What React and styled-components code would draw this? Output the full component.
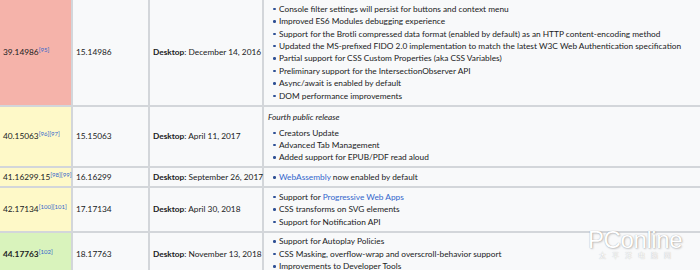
import React from "react";
import styled, { createGlobalStyle } from "styled-components";

const Global = createGlobalStyle`
  html, body { margin: 0; padding: 0; background: #ffffff; }
  body { font-family: "Lato", "Noto Sans", sans-serif; color: #202122; }
`;

const Page = styled.div`
  position: relative;
  width: 700px;
  height: 270px;
  overflow: hidden;
  background: #f8f9fa;
`;

const Table = styled.table`
  width: 700px;
  border-collapse: collapse;
  table-layout: fixed;
  font-size: 8.3px;
  line-height: 12.4px;
  background: #f8f9fa;
`;

const Row = styled.tr`
  & + & > td { border-top: 2px solid #d3d6da; }
`;

const tones = {
  red: "#f5b3aa",
  yellow: "#fef9c8",
  green: "#d9f3bc",
};

const Cell = styled.td`
  padding: 2.7px 3px;
  vertical-align: middle;
  white-space: nowrap;
  background: ${(p) => (p.$tone ? tones[p.$tone] : "#f8f9fa")};
  font-weight: ${(p) => (p.$bold ? 700 : 400)};
  & + & { border-left: 2px solid #d3d6da; }
`;

const NotesCell = styled(Cell)`
  padding: 2.7px 4px;
  vertical-align: top;
`;

const Ref = styled.sup`
  font-size: 6px;
  line-height: 0;
  color: #3366cc;
  font-weight: 400;
  vertical-align: 3px;
`;

const Intro = styled.p`
  margin: 1.6px 0 3.2px;
  font-style: italic;
`;

const List = styled.ul`
  margin: 0;
  padding: 0 0 0 11px;
  list-style: none;
`;

const Item = styled.li`
  position: relative;
  &::before {
    content: "";
    position: absolute;
    left: -6px;
    top: 5px;
    width: 2.5px;
    height: 2.5px;
    border-radius: 50%;
    background: #2e4f94;
  }
`;

const Link = styled.span`
  color: #3366cc;
`;

const Watermark = styled.div`
  position: absolute;
  left: 588px;
  top: 229px;
  display: flex;
  flex-direction: column;
  align-items: center;
  color: #ffffff;
  pointer-events: none;
`;

const Brand = styled.div`
  font-family: "Liberation Sans", Arial, sans-serif;
  font-size: 24px;
  line-height: 22px;
  letter-spacing: -0.4px;
  text-shadow: 0 0 1px rgba(0, 0, 0, 0.35), 1px 1px 2px rgba(0, 0, 0, 0.2);
`;

const Tagline = styled.div`
  font-family: "Noto Sans CJK SC", sans-serif;
  font-size: 7px;
  line-height: 9px;
  letter-spacing: 6px;
  margin-left: 6px;
  text-shadow: 0 0 1px rgba(0, 0, 0, 0.35);
`;

const Desk = ({ children, colonBold }) => (
  <>
    <b>{colonBold ? "Desktop:" : "Desktop"}</b>
    {colonBold ? " " : ": "}
    {children}
  </>
);

export default function App() {
  return (
    <Page>
      <Global />
      <Table>
        <colgroup>
          <col style={{ width: 72 }} />
          <col style={{ width: 77 }} />
          <col style={{ width: 114 }} />
          <col />
        </colgroup>
        <tbody>
          <Row>
            <Cell $tone="red">
              39.14986<Ref>[95]</Ref>
            </Cell>
            <Cell>15.14986</Cell>
            <Cell>
              <Desk>December 14, 2016</Desk>
            </Cell>
            <NotesCell>
              <List>
                <Item>Console filter settings will persist for buttons and context menu</Item>
                <Item>Improved ES6 Modules debugging experience</Item>
                <Item>Support for the Brotli compressed data format (enabled by default) as an HTTP content-encoding method</Item>
                <Item>Updated the MS-prefixed FIDO 2.0 implementation to match the latest W3C Web Authentication specification</Item>
                <Item>Partial support for CSS Custom Properties (aka CSS Variables)</Item>
                <Item>Preliminary support for the IntersectionObserver API</Item>
                <Item>Async/await is enabled by default</Item>
                <Item>DOM performance improvements</Item>
              </List>
            </NotesCell>
          </Row>
          <Row>
            <Cell $tone="yellow">
              40.15063<Ref>[96][97]</Ref>
            </Cell>
            <Cell>15.15063</Cell>
            <Cell>
              <Desk>April 11, 2017</Desk>
            </Cell>
            <NotesCell>
              <Intro>Fourth public release</Intro>
              <List>
                <Item>Creators Update</Item>
                <Item>Advanced Tab Management</Item>
                <Item>Added support for EPUB/PDF read aloud</Item>
              </List>
            </NotesCell>
          </Row>
          <Row>
            <Cell $tone="yellow">
              41.16299.15<Ref>[98][99]</Ref>
            </Cell>
            <Cell>16.16299</Cell>
            <Cell>
              <Desk colonBold>September 26, 2017</Desk>
            </Cell>
            <NotesCell>
              <List>
                <Item>
                  <Link>WebAssembly</Link> now enabled by default
                </Item>
              </List>
            </NotesCell>
          </Row>
          <Row>
            <Cell $tone="yellow">
              42.17134<Ref>[100][101]</Ref>
            </Cell>
            <Cell>17.17134</Cell>
            <Cell>
              <Desk>April 30, 2018</Desk>
            </Cell>
            <NotesCell>
              <List>
                <Item>
                  Support for <Link>Progressive Web Apps</Link>
                </Item>
                <Item>CSS transforms on SVG elements</Item>
                <Item>Support for Notification API</Item>
              </List>
            </NotesCell>
          </Row>
          <Row>
            <Cell $tone="green" $bold>
              44.17763<Ref>[102]</Ref>
            </Cell>
            <Cell>18.17763</Cell>
            <Cell>
              <Desk>November 13, 2018</Desk>
            </Cell>
            <NotesCell>
              <List>
                <Item>Support for Autoplay Policies</Item>
                <Item>CSS Masking, overflow-wrap and overscroll-behavior support</Item>
                <Item>Improvements to Developer Tools</Item>
              </List>
            </NotesCell>
          </Row>
        </tbody>
      </Table>
      <Watermark>
        <Brand>PConline</Brand>
        <Tagline>太平洋电脑网</Tagline>
      </Watermark>
    </Page>
  );
}
